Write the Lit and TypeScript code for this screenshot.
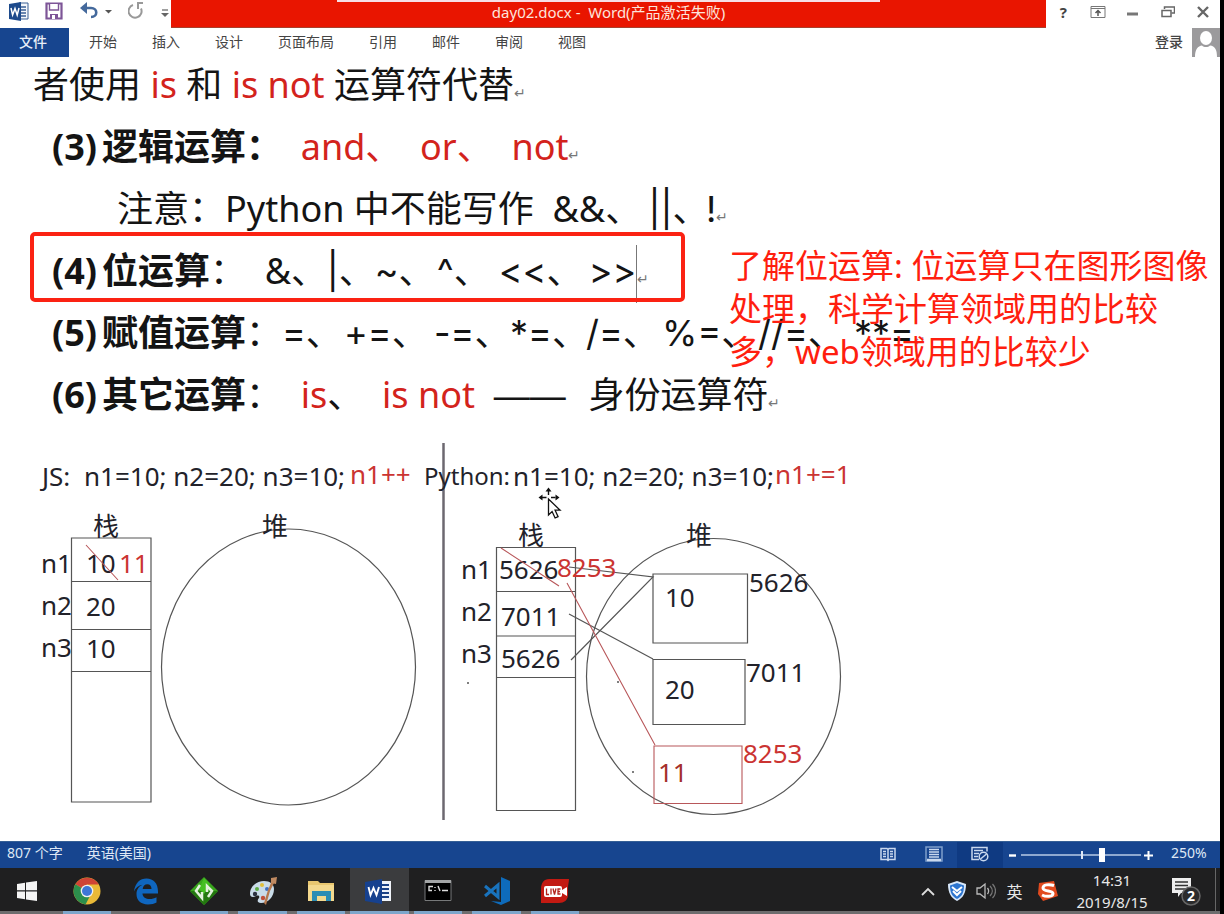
import { LitElement, html, svg, css } from "lit";
import { customElement, state } from "lit/decorators.js";
import { classMap } from "lit/directives/class-map.js";

const fontStack = css`"Noto Sans", "Noto Sans CJK SC", sans-serif`;

/* ---------- Title bar and ribbon ---------- */

@customElement("word-header")
class WordHeader extends LitElement {
  static styles = css`
    :host { display: block; font-family: ${fontStack}; color: #444; }
    button { border: 0; padding: 0; background: none; font: inherit; color: inherit; display: flex; align-items: center; justify-content: center; }
    svg { display: block; }
    .title { display: flex; height: 28px; align-items: stretch; }
    .quick { width: 171px; box-sizing: border-box; display: flex; align-items: flex-start; padding: 0 2px 0 9px; justify-content: space-between; }
    .quick button { height: 22px; }
    .name { flex: 1; min-width: 0; background: #e91500; color: #fde4dc; font-size: 15px; line-height: 24px; text-align: center; white-space: pre; border-bottom: 1px solid #a8412e; box-sizing: border-box; position: relative; }
    .strip { position: absolute; top: 0; left: 19%; right: 19%; height: 2px; background: #f6dfe6; }
    .window { width: 174px; display: flex; }
    .window button { flex: 1; height: 24px; font-size: 15px; font-weight: 700; }
    .tabs { display: flex; height: 29px; align-items: stretch; font-size: 14px; }
    .file { width: 69px; padding: 0 3px 4px 0; background: #17458f; color: #e8eef8; font-weight: 500; }
    .list { display: flex; gap: 35px; padding-left: 20px; flex: 1; }
    .list button, .account { height: 26px; }
    .account { font-weight: 500; padding-right: 9px; }
  `;

  render() {
    return html`
      <header class="title">
        <div class="quick">
          <button aria-label="Word">
            <svg width="20" height="20" viewBox="0 0 20 20">
              <path d="M10 2h9v16h-9z" fill="#f4f7fb" stroke="#3a6096" />
              <path d="M11 6h6M11 9h6M11 12h6M11 15h6" stroke="#3a6096" stroke-width="1.4" />
              <path d="M0 3l12-2v19L0 18z" fill="#1d4a8c" />
              <path d="M2 7l1.6 7L6 7.500l2.200 6.500L10 7" fill="none" stroke="#fff" stroke-width="1.500" />
            </svg>
          </button>
          <button aria-label="保存">
            <svg width="18" height="18" viewBox="0 0 18 18">
              <path d="M1.500 1.500h15v15h-15z" fill="#fff" stroke="#7d5597" stroke-width="2.200" />
              <path d="M4.500 2v6h9V2" fill="#fff" stroke="#7d5597" stroke-width="1.400" />
              <path d="M5 17v-5h8v5" fill="#7d5597" />
              <path d="M7 13h3v4H7z" fill="#fff" />
            </svg>
          </button>
          <button aria-label="撤消">
            <svg width="32" height="20" viewBox="0 0 32 20">
              <path d="M3 7h8c7 0 7 9 0 9" fill="none" stroke="#44699c" stroke-width="2.600" />
              <path d="M0 7l7-6v12z" fill="#44699c" />
              <path d="M25 9h7l-3.500 3.500z" fill="#555" />
            </svg>
          </button>
          <button aria-label="重复">
            <svg width="17" height="20" viewBox="0 0 17 20">
              <path d="M5 4a6.500 6.500 0 1 0 8 3.500" fill="none" stroke="#999" stroke-width="2" />
              <path d="M9 2h6M10 2v6" fill="none" stroke="#999" stroke-width="2" />
            </svg>
          </button>
          <button aria-label="自定义快速访问工具栏">
            <svg width="8" height="20" viewBox="0 0 8 20">
              <path d="M1 9h6" stroke="#777" stroke-width="1.400" />
              <path d="M0 12h8l-4 4z" fill="#666" />
            </svg>
          </button>
        </div>
        <div class="name"><span class="strip"></span>day02.docx -  Word(产品激活失败)</div>
        <div class="window">
          <button aria-label="帮助">?</button>
          <button aria-label="功能区显示选项">
            <svg width="16" height="14" viewBox="0 0 16 14">
              <path d="M1 1.500h14v11H1zM1 3.500h14" fill="none" stroke="#777" />
              <path d="M8 11V6M5.500 8L8 5.500 10.500 8" fill="none" stroke="#555" stroke-width="1.500" />
            </svg>
          </button>
          <button aria-label="最小化">
            <svg width="12" height="12" viewBox="0 0 12 12"><path d="M0 8h11" stroke="#777" stroke-width="3" /></svg>
          </button>
          <button aria-label="还原">
            <svg width="14" height="14" viewBox="0 0 14 14">
              <path d="M3.500 4V2h10v6h-3" fill="none" stroke="#666" stroke-width="1.500" />
              <path d="M1 5.500h9v6H1z" fill="#fff" stroke="#666" stroke-width="1.500" />
            </svg>
          </button>
          <button aria-label="关闭">
            <svg width="12" height="12" viewBox="0 0 12 12"><path d="M1 1l10 10M11 1L1 11" stroke="#666" stroke-width="2.400" /></svg>
          </button>
        </div>
      </header>
      <nav class="tabs">
        <button class="file">文件</button>
        <div class="list">
          ${["开始", "插入", "设计", "页面布局", "引用", "邮件", "审阅", "视图"].map((t) => html`<button>${t}</button>`)}
        </div>
        <button class="account">登录</button>
        <svg width="28" height="29" viewBox="0 0 28 29" role="img" aria-label="用户">
          <path d="M0 0h28v29H0z" fill="#9b9a9c" />
          <ellipse cx="14" cy="10" rx="6" ry="7" fill="#fff" />
          <path d="M3 29c0-8 3-11 7-11.500 2 2 6 2 8 0 5 .5 7 4 7 11.500z" fill="#fff" />
        </svg>
      </nav>
    `;
  }
}

/* ---------- Stack and heap drawing ---------- */

type Label = [x: number, y: number, text: string, kind?: string];

const labels: Label[] = [
  [42, 486, "JS:"],
  [84, 486, "n1=10; n2=20; n3=10;"],
  [350, 484, "n1++", "red"],
  [424, 485, "Python:", "small"],
  [513, 486, "n1=10; n2=20; n3=10;"],
  [775, 484, "n1+=1", "red"],
  [93, 536, "栈"],
  [262, 536, "堆"],
  [41, 573, "n1"],
  [41, 615, "n2"],
  [41, 657, "n3"],
  [86, 573, "10"],
  [119, 573, "11", "red"],
  [86, 616, "20"],
  [86, 658, "10"],
  [518, 545, "栈"],
  [686, 545, "堆"],
  [461, 579, "n1"],
  [461, 621, "n2"],
  [461, 663, "n3"],
  [499, 579, "5626"],
  [557, 577, "8253", "red"],
  [501, 626, "7011"],
  [501, 668, "5626"],
  [665, 607, "10"],
  [665, 699, "20"],
  [658, 782, "11", "dark-red"],
  [749, 592, "5626"],
  [746, 682, "7011"],
  [743, 763, "8253", "red"],
];

@customElement("memory-diagram")
class MemoryDiagram extends LitElement {
  static styles = css`
    :host { display: block; }
    svg { display: block; font-family: ${fontStack}; }
    .ink { fill: none; stroke: #555; stroke-width: 1.2; }
    .pen { fill: none; stroke: #b8575a; stroke-width: 1.1; }
    .divider { stroke: #6c6870; stroke-width: 2.5; }
    .label { font-size: 26px; fill: #22222a; }
    .small { font-size: 24px; }
    .red { fill: #cb3432; }
    .dark-red { fill: #a52f2b; }
  `;

  render() {
    return html`
      <svg width="860" height="410" viewBox="0 423 860 410" role="img" aria-label="栈 堆">
        <path class="divider" d="M443.500 443v377" />
        <path class="ink" d="M71.500 538h79.500v264H71.500zM71.500 581.500h79.500M71.500 629.500h79.500M71.500 671.500h79.500" />
        <ellipse class="ink" cx="288.500" cy="667" rx="127" ry="138" />
        <path class="ink" d="M496.500 547.500h79v263h-79zM496.500 591.500h79M496.500 636h79M496.500 677.500h79" />
        <ellipse class="ink" cx="713.500" cy="676.500" rx="127" ry="138" />
        <path class="ink" d="M653 574h94.500v69H653zM653 659.500h92v65h-92z" />
        <path class="ink" d="M569 567l84 10L571 660M569 614l84 45" />
        <path class="pen" d="M654 746h88v57.500h-88z" />
        ${labels.map(
          ([x, y, text, kind]) => svg`<text class="label ${kind ?? ""}" x=${x} y=${y}>${text}</text>`
        )}
        <path class="pen" d="M86 545l32 35M501 548l58 38M567 583l88 162" />
        <path d="M467 683h2M617 682h2M632 772h2" stroke="#555" stroke-width="1.500" />
        <g fill="#111">
          <path d="M548.500 487.500l3 4h-6zM538.500 497.500l4-3v6zM559.500 497.500l-4-3v6z" />
          <path d="M542 496.800h4.500v1.400H542zM551 496.800h4.500v1.400H551zM547.800 491h1.400v4h-1.400z" />
          <path d="M548.500 499v16l3.600-3.500 3 6.500 3-1.400-3-6.400h5z" fill="#fff" stroke="#111" stroke-width="1.300" />
        </g>
      </svg>
    `;
  }
}

/* ---------- Document page ---------- */

@customElement("word-document")
class WordDocument extends LitElement {
  static styles = css`
    :host { display: block; position: relative; background: #fff; font-family: ${fontStack}; color: #141414; }
    .lines { display: grid; gap: 6px; font-size: 36px; line-height: 56px; white-space: pre; }
    .line { margin: 0; height: 56px; padding-left: 52px; }
    .first { padding-left: 33px; }
    .note { padding-left: 117px; }
    b { font-weight: 700; }
    i { font-style: normal; color: #d3231c; }
    .num { display: inline-block; width: 50px; }
    .mark { font-size: 14px; color: #777; }
    .op { display: inline-block; font-family: "Inter", "Noto Sans CJK SC", sans-serif; }
    .amp { display: inline-block; }
    .w48 { width: 48px; }
    .w62 { width: 62px; }
    .w76 { width: 76px; }
    .w90 { width: 90px; }
    .w96 { width: 96px; }
    .dash { display: inline-block; line-height: 40px; font-family: "Liberation Sans", sans-serif; }
    .caret { display: inline-block; width: 1px; height: 58px; background: #777; vertical-align: middle; }
    .frame { position: absolute; left: 30px; top: 175px; width: 655px; height: 70px; box-sizing: border-box; border: 4px solid #fb2213; border-radius: 5px; }
    .comment { position: absolute; left: 729px; top: 187px; margin: 0; font-size: 33px; line-height: 43px; color: #ff1e0f; white-space: nowrap; }
  `;

  render() {
    const mark = html`<span class="mark">↵</span>`;
    return html`
      <div class="lines">
        <p class="line first">者使用 <i>is</i> 和 <i>is not</i> 运算符代替${mark}</p>
        <p class="line"><b><span class="num">(3)</span>逻辑运算：</b>  <i>and、  or、  not</i>${mark}</p>
        <p class="line note">注意：Python 中不能写作  <span class="amp w96">&amp;&amp;、</span><span class="op w48">||、</span> <span class="op">!</span>${mark}</p>
        <p class="line"><b><span class="num">(4)</span>位运算</b>：  <span class="amp w62">&amp;、</span><span class="op w48">|、</span><span class="op w62">~、</span><span class="op w62">^、</span><span class="op w90">&lt;&lt;、</span><span class="op">&gt;&gt;</span><span class="caret"></span>${mark}</p>
        <p class="line"><b><span class="num">(5)</span>赋值运算</b>：<span class="op w62">=、</span><span class="op w90">+=、</span><span class="op w76">-=、</span><span class="op w76">*=、</span><span class="op w76">/=、</span><span class="op w96">%=、</span><span class="op w96">//=、</span><span class="op">**=</span>${mark}</p>
        <p class="line"><b><span class="num">(6)</span>其它运算</b>：  <i>is</i>、  <i>is not</i>  <span class="dash w76">——</span>  身份运算符${mark}</p>
      </div>
      <memory-diagram></memory-diagram>
      <div class="frame"></div>
      <p class="comment">了解位运算: 位运算只在图形图像<br />处理，科学计算领域用的比较<br />多，web领域用的比较少</p>
    `;
  }
}

/* ---------- Word status bar ---------- */

@customElement("word-status")
class WordStatus extends LitElement {
  @state() zoom = 68;

  static styles = css`
    :host { display: flex; height: 27px; align-items: stretch; background: #17458f; color: #dfe8f5; font-family: ${fontStack}; font-size: 14px; line-height: 22px; box-sizing: border-box; border-top: 1px solid #355f95; }
    button { border: 0; padding: 0; background: none; font: inherit; color: inherit; }
    .info { display: flex; gap: 24px; padding: 0 0 4px 7px; flex: 1; }
    .view { width: 46px; display: flex; align-items: center; justify-content: center; padding-bottom: 2px; }
    .on { background: #0f3a82; }
    .zoom { display: flex; align-items: center; padding-left: 6px; gap: 3px; }
    .step { display: flex; width: 9px; height: 26px; align-items: center; }
    .slider { appearance: none; width: 120px; height: 16px; margin: 0; background: linear-gradient(#dfe8f5, #dfe8f5) 60px 4px / 2px 8px no-repeat, linear-gradient(#8fa9d0, #8fa9d0) 0 7px / 100% 2px no-repeat; }
    .slider::-webkit-slider-thumb { appearance: none; width: 6px; height: 14px; background: #fff; }
    .percent { width: 38px; padding: 0 11px 0 18px; }
  `;

  render() {
    return html`
      <div class="info"><button>807 个字</button><button>英语(美国)</button></div>
      <button class="view" aria-label="阅读视图">
        <svg width="16" height="15" viewBox="0 0 16 15" fill="none" stroke="#c9d8ee" stroke-width="1.500">
          <path d="M1 1.500h6l1 1 1-1h6v11H9l-1 1-1-1H1zM8 3v10M3 4.500h3M3 7h3M3 9.500h3M10 4.500h3M10 7h3M10 9.500h3" />
        </svg>
      </button>
      <button class="view" aria-label="页面视图">
        <svg width="18" height="16" viewBox="0 0 18 16" fill="none" stroke="#c9d8ee" stroke-width="1.500">
          <path d="M1 1h16v14H1z" stroke="#7f9fcc" /><path d="M4 3.500h10M4 6h10M4 8.500h10M4 11h10" /><path d="M2 14h14" stroke-width="2.500" />
        </svg>
      </button>
      <button class="view on" aria-label="Web 版式视图">
        <svg width="18" height="16" viewBox="0 0 18 16" fill="none" stroke="#c9d8ee" stroke-width="1.500">
          <path d="M8 13.500H1v-12h15v4M3 4.500h9M3 7.500h5M3 10.500h4" /><circle cx="12.500" cy="10.500" r="4.300" /><path d="M9.500 13l6-5" />
        </svg>
      </button>
      <div class="zoom">
        <button class="step" aria-label="缩小"><svg width="8" height="9" viewBox="0 0 8 9"><path d="M0 4.500h7" stroke="#fff" stroke-width="2.400" /></svg></button>
        <input class="slider" type="range" aria-label="显示比例" .value=${String(this.zoom)} @input=${(e: Event) => (this.zoom = Number((e.target as HTMLInputElement).value))} />
        <button class="step" aria-label="放大"><svg width="9" height="9" viewBox="0 0 9 9"><path d="M0 4.500h9M4.500 0v9" stroke="#fff" stroke-width="2" /></svg></button>
      </div>
      <span class="percent">250%</span>
    `;
  }
}

/* ---------- Windows taskbar ---------- */

const apps = [
  {
    name: "Chrome", open: true,
    icon: svg`<circle cx="14" cy="14" r="13.500" fill="#e9b937" />
      <path d="M14 14L2.300 7.300A13.500 13.500 0 0 1 25.700 7.500H14z" fill="#cf4436" />
      <path d="M14 14L2.300 7.300A13.500 13.500 0 0 0 12.500 27.400L18 17z" fill="#2c8f4c" />
      <circle cx="14" cy="14" r="6.300" fill="#f1f1ee" /><circle cx="14" cy="14" r="5" fill="#3e76d6" />`,
  },
  {
    name: "Edge", open: false,
    icon: svg`<path d="M2 14.500C3 6 8 1.500 14.500 1.500c7 0 11.500 5 11.500 13v2H10.500c.2 4 3.500 5.500 7 5.500 2.800 0 5-.7 7-1.800v5.200c-2 1.200-5 2-8.500 2C8.500 27.400 4.500 23 4.500 17c0-4 2.200-7.500 6-9.200C6.500 8.300 3.500 11 2 14.500zM10.700 12h8.800c0-3-1.500-4.700-4.200-4.700-2.600 0-4.300 2-4.600 4.700z" fill="#0f66bf" />`,
  },
  {
    name: "HBuilder", open: true,
    icon: svg`<path d="M14 0l14 14-14 14L0 14z" fill="#38a51c" /><path d="M0 14h28L14 28z" fill="#23780f" />
      <path d="M14 1l6 6-6 10-5-5z" fill="#45bf22" />
      <path d="M10 8l-4 6 6 7v-6M18 20l4-6-5-5v6" fill="none" stroke="#e3f1dd" stroke-width="2.500" />`,
  },
  {
    name: "画图", open: true,
    icon: svg`<path d="M1 17C1 9 8 4 15 4c6 0 10 3 10 8 0 8-6 14-13 14-4 0-4-3-2-5 1-2-1-3-3-2-3 2-6 1-6-2z" fill="#c9dbe8" />
      <circle cx="8" cy="12" r="2" fill="#5dab45" /><circle cx="13" cy="8" r="2" fill="#e0bf3a" /><circle cx="18" cy="12" r="2" fill="#406fc0" /><circle cx="6" cy="17" r="2.200" fill="#2b3140" /><circle cx="14" cy="21" r="2.200" fill="#c0503a" />
      <path d="M27 2l-6 12-4 14-2-2 4-13 5-12z" fill="#b5784d" /><path d="M22 1l6-1-1 7-5-1z" fill="#c08a61" />`,
  },
  {
    name: "文件资源管理器", open: true,
    icon: svg`<path d="M1 4h10l2 2h14v18H1z" fill="#e9c770" /><path d="M1 8h26v16H1z" fill="#f4d98e" />
      <path d="M5 24V14h19v10h-5v-5h-9v5z" fill="#2c8db4" />`,
  },
  {
    name: "Word", open: true, active: true,
    icon: svg`<path d="M13 4h13v20H13z" fill="#f0f4fa" /><path d="M16 8h8M16 12h8M16 16h8M16 20h8" stroke="#1c4286" stroke-width="2" />
      <path d="M0 5l17-3v25L0 24z" fill="#16418f" /><path d="M3.500 10l2 8 3-7 3 7 2.500-8" fill="none" stroke="#fff" stroke-width="1.900" />`,
  },
  {
    name: "命令提示符", open: true,
    icon: svg`<path d="M1 3.500h26v20H1z" fill="#000" stroke="#77797a" /><path d="M1 3h26v3H1z" fill="#a3a5a6" />
      <path d="M9 9.500H5v4h3M11 10v1M11 13v1M14 9l2 5M18 13.500h6" fill="none" stroke="#ddd" stroke-width="1.400" />`,
  },
  {
    name: "Visual Studio Code", open: true,
    icon: svg`<path d="M19 0l9 4v20l-9 4L9 24l10 1z" fill="#0e6bbb" /><path d="M3 9l13 11V8L3 19" fill="none" stroke="#1973bd" stroke-width="3" />`,
  },
  {
    name: "Live", open: true,
    icon: svg`<path d="M8 2h20c0 3-1 5-1 9v7c0 5-4 8-9 8H0V12C0 6 3 2 8 2z" fill="#c31a12" />
      <rect x="3" y="9" width="18" height="11" rx="2" fill="#fff" /><path d="M21 13l5-3v9l-5-3z" fill="#fff" />
      <path d="M5.500 11.500v6H8M10 11.500v6M12 11.500l1.500 6 1.500-6M19.500 12H17v5h2.500M17 14.500h2" fill="none" stroke="#b3251d" stroke-width="1.300" />`,
  },
];

@customElement("task-bar")
class TaskBar extends LitElement {
  static styles = css`
    :host { display: flex; height: 46px; background: linear-gradient(#1f1f20 43px, #6d6d6e 43px); color: #e8e8e8; font-family: ${fontStack}; font-size: 14px; }
    button { border: 0; padding: 0; background: none; font: inherit; color: inherit; display: flex; align-items: center; justify-content: center; }
    svg { display: block; }
    .start { width: 54px; height: 46px; }
    .apps { display: grid; grid-template-columns: repeat(9, 1fr); width: 526px; margin-left: 4px; }
    .app { position: relative; }
    .open::after { content: ""; position: absolute; left: 5px; right: 5px; bottom: 0; height: 3px; background: #7ea6cb; }
    .active { background: #3b3c3e; }
    .active::after { left: 0; right: 0; }
    .tray { margin-left: auto; display: flex; align-items: stretch; }
    .tray button { width: 29px; }
    .tray .ime { font-size: 16px; }
    .tray .sogou { width: 38px; }
    .tray .clock { width: 90px; flex-direction: column; line-height: 22px; font-size: 15px; }
    .tray .notice { width: 58px; }
    .peek { width: 4px; height: 43px; border-left: 1px solid #666; }
  `;

  render() {
    return html`
      <button class="start" aria-label="开始">
        <svg width="20" height="20" viewBox="0 0 20 20" fill="#f4f4f4"><path d="M0 3l8-1.200V9.300H0zM9 1.600L20 0v9.300H9zM0 10.500h8v7.700L0 17zM9 10.500h11V20L9 18.400z" /></svg>
      </button>
      <nav class="apps">
        ${apps.map(
          (a) => html`<button class=${classMap({ app: true, open: a.open, active: !!a.active })} aria-label=${a.name}>
            <svg width="28" height="28" viewBox="0 0 28 28">${a.icon}</svg>
          </button>`
        )}
      </nav>
      <div class="tray">
        <button aria-label="显示隐藏的图标"><svg width="14" height="9" viewBox="0 0 14 9"><path d="M1 8l6-6 6 6" fill="none" stroke="#ddd" stroke-width="1.800" /></svg></button>
        <button aria-label="安全"><svg width="20" height="20" viewBox="0 0 20 20">
          <path d="M10 0l9 3c0 9-3 14-9 17C4 17 1 12 1 3z" fill="#d8e8fa" /><path d="M10 2l7 2.500c0 7-2 11-7 13.500-5-2.500-7-6.500-7-13.500z" fill="#2d75cf" /><path d="M5 6l5 4 5-4M6 10l4 4 4-4" fill="none" stroke="#fff" stroke-width="2" />
        </svg></button>
        <button aria-label="音量"><svg width="20" height="18" viewBox="0 0 20 18" fill="none" stroke="#bbb" stroke-width="1.300">
          <path d="M1 6h3l5-4v14l-5-4H1z" /><path d="M11.500 6c1.500 2 1.500 4 0 6" /><path d="M14 4c3 3 3 7 0 10M16.500 2c4 4 4 10 0 14" stroke="#777" />
        </svg></button>
        <button class="ime">英</button>
        <button class="sogou" aria-label="搜狗输入法"><svg width="22" height="20" viewBox="0 0 22 20">
          <path d="M2 2l15-2 4 15-15 5-5-7z" fill="#e14a1e" /><path d="M17 4.500C12 3 6 3.500 6 7c0 4 10 2 10 5.500 0 3.500-7 3.500-11 1.500" fill="none" stroke="#fff" stroke-width="3" />
        </svg></button>
        <button class="clock"><span>14:31</span><span>2019/8/15</span></button>
        <button class="notice" aria-label="操作中心"><svg width="30" height="30" viewBox="0 0 30 30">
          <path d="M1 2h19v15H10l-3 4v-4H1z" fill="#eee" /><path d="M4 6h13M4 9.500h13M4 13h13" stroke="#333" stroke-width="1.500" />
          <circle cx="20" cy="20" r="9" fill="#2b2b2c" stroke="#666" stroke-width="1.500" />
          <text x="20" y="25" text-anchor="middle" font-size="14" font-weight="700" fill="#fff">2</text>
        </svg></button>
        <div class="peek"></div>
      </div>
    `;
  }
}

@customElement("app-root")
class AppRoot extends LitElement {
  static styles = css`
    :host { display: flex; flex-direction: column; box-sizing: border-box; min-height: 100vh; background: #fff; border-right: 4px solid #000; overflow: hidden; }
    .page { flex: 1; }
  `;

  render() {
    return html`
      <word-header></word-header>
      <word-document class="page"></word-document>
      <word-status></word-status>
      <task-bar></task-bar>
    `;
  }
}
